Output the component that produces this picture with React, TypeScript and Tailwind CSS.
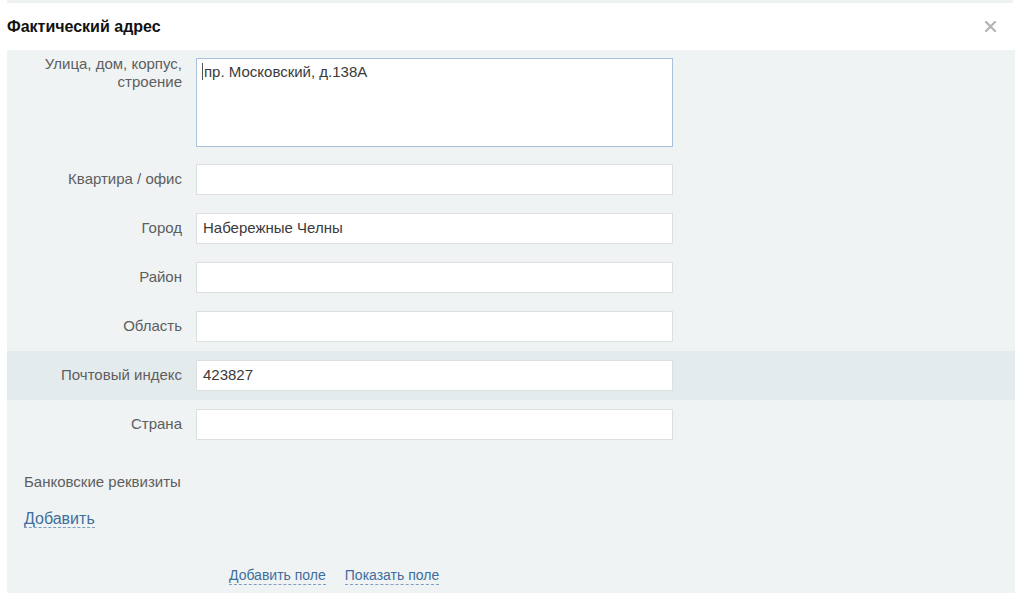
import React from 'react';

interface Field {
  label: string;
  value?: string;
  highlight?: boolean;
}

const fields: Field[] = [
  { label: 'Квартира / офис' },
  { label: 'Город', value: 'Набережные Челны' },
  { label: 'Район' },
  { label: 'Область' },
  { label: 'Почтовый индекс', value: '423827', highlight: true },
  { label: 'Страна' },
];

function DashedLink({ children, className = '' }: { children: React.ReactNode; className?: string }) {
  return (
    <span className={`text-[#3f6d9c] border-b border-dashed border-[#7f9dbd] leading-[18px] cursor-pointer ${className}`}>
      {children}
    </span>
  );
}

export default function App() {
  return (
    <div className="w-[1024px] h-[600px] bg-white overflow-hidden font-['Liberation_Sans',Arial,sans-serif]">
      <div className="mx-[7px] w-[1006px] h-[3px] bg-[#eef1f2]" />

      {/* header */}
      <div className="flex items-center justify-between h-[47px] pl-[7px] pr-[28px]">
        <h2 className="text-[16px] font-bold text-[#111]">Фактический адрес</h2>
        <svg width="11" height="11" viewBox="0 0 11 11" className="text-[#b3b3b3]">
          <path d="M1 1L10 10M10 1L1 10" stroke="currentColor" strokeWidth="2.2" strokeLinecap="round" />
        </svg>
      </div>

      {/* form panel */}
      <div className="ml-[7px] w-[1008px] h-[543px] bg-[#eff3f4] flex flex-col">
        <div className="flex pt-[8px] pb-[8px]">
          <div className="w-[175px] text-right text-[15px] leading-[18px] text-[#5e5e5e] -mt-[3px]">
            Улица, дом, корпус,
            <br />
            строение
          </div>
          <div className="ml-[14px] w-[477px] h-[89px] bg-white border border-[#a9c1d9] px-[5px] pt-[4px] text-[15px] leading-[18px] text-[#3a3a3a] flex items-start">
            <span className="inline-block w-px h-[17px] bg-[#555] mr-[1px]" />
            пр. Московский, д.138А
          </div>
        </div>

        {fields.map((f) => (
          <div
            key={f.label}
            className={`flex items-center py-[9px] ${f.highlight ? 'bg-[#e4ebed]' : ''}`}
          >
            <div className="w-[175px] text-right text-[15px] leading-[18px] text-[#5e5e5e] -mt-[2px]">
              {f.label}
            </div>
            <div className="ml-[14px] w-[477px] h-[31px] bg-white border border-[#dcdfe0] px-[6px] flex items-center text-[15px] text-[#3a3a3a]">
              {f.value}
            </div>
          </div>
        ))}

        <div className="pl-[17px] mt-[24px] text-[15px] leading-[18px] text-[#5e5e5e]">Банковские реквизиты</div>
        <div className="pl-[17px] mt-[16px] text-[16px]">
          <DashedLink>Добавить</DashedLink>
        </div>

        <div className="flex gap-[19px] pl-[222px] mt-[35px] text-[14px]">
          <DashedLink>Добавить поле</DashedLink>
          <DashedLink>Показать поле</DashedLink>
        </div>
      </div>
    </div>
  );
}
